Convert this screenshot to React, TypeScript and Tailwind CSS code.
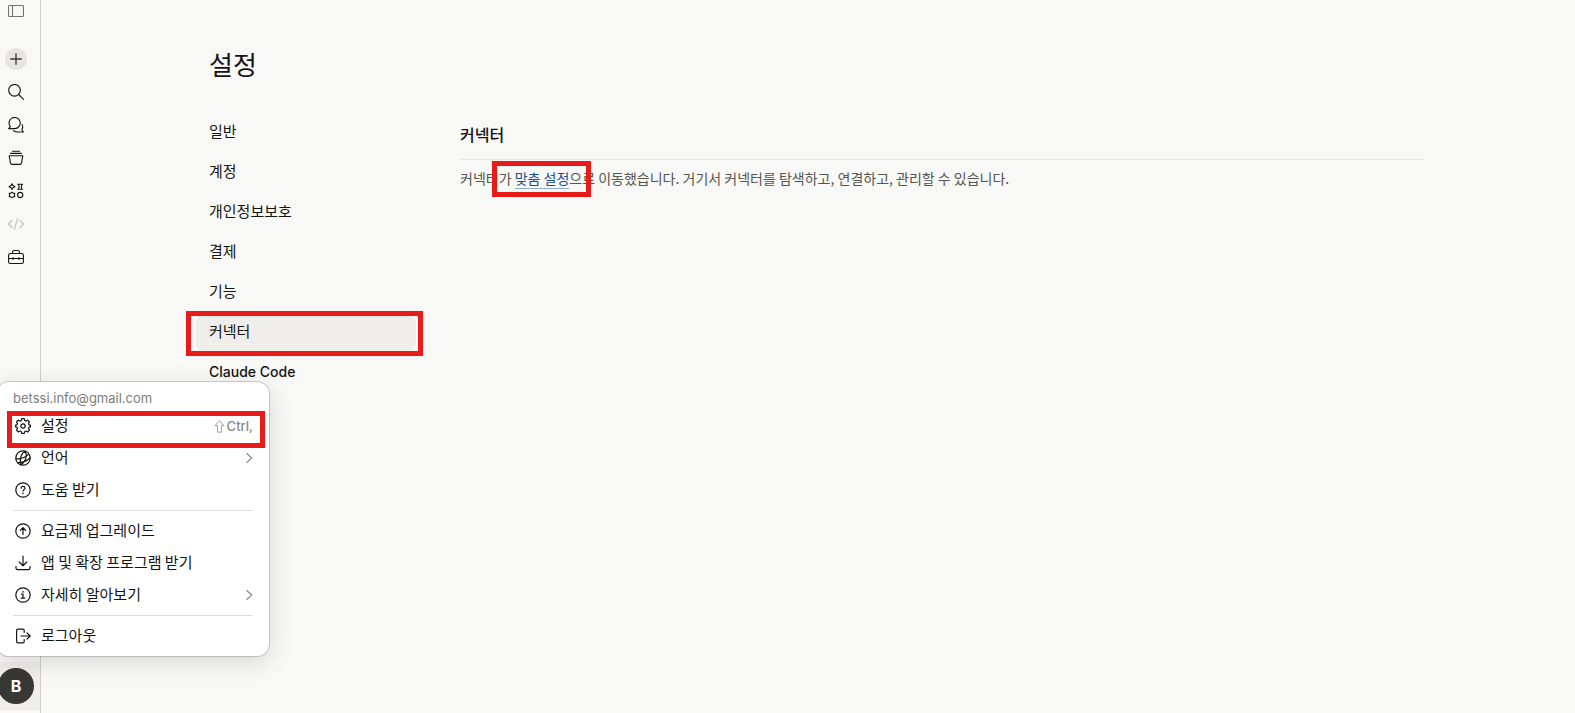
import type { ReactNode } from "react";

const Icon = ({ children, size = 16, width = 1.1 }: { children: ReactNode; size?: number; width?: number }) => (
  <svg
    width={size}
    height={size}
    viewBox="0 0 16 16"
    fill="none"
    stroke="currentColor"
    strokeWidth={width}
    strokeLinecap="round"
    strokeLinejoin="round"
    aria-hidden="true"
    className="shrink-0"
  >
    {children}
  </svg>
);

const sidebarItems = [
  {
    label: "검색",
    icon: (
      <>
        <circle cx="6.5" cy="6.3" r="5.8" />
        <path d="M10.7 10.5l4.8 4.8" />
      </>
    ),
  },
  {
    label: "채팅",
    icon: (
      <>
        <path d="M.6 11.600l1.800-1.900A5.600 5.600 0 1 1 7.200 11.600z" />
        <path d="M14.200 7.600c.8 1.900.6 3.700-.4 5.200l1.600 2.200H10.200c-2.100 0-3.600-.5-4.600-1.300" />
      </>
    ),
  },
  {
    label: "프로젝트",
    icon: (
      <>
        <path d="M4.500 1.200h7M2.600 3.400h10.800" />
        <path d="M1.200 5.700h13.600l-1.200 7.100a1.900 1.900 0 0 1-1.900 1.600H4.300a1.900 1.900 0 0 1-1.900-1.600z" />
      </>
    ),
  },
  {
    label: "아티팩트",
    icon: (
      <>
        <path d="M4 .9l1 1.700 1.900 1.100L5 4.800 4 6.500 3 4.800 1.100 3.700 3 2.600z" />
        <path d="M9.700 1.200h5M9.700 6.200h5M10.500 1.200c.8 1.700.8 3.300 0 5M13.900 1.200c-.8 1.700-.8 3.300 0 5" />
        <path d="M4 9.200l1.200 1 1.600.2-.5 1.600.5 1.600-1.600.2-1.200 1-1.200-1-1.600-.2.500-1.600-.5-1.600 1.600-.2z" />
        <circle cx="12.200" cy="12" r="2.600" />
      </>
    ),
  },
  {
    label: "코드",
    muted: true,
    icon: <path d="M4.200 4.300L.6 8l3.600 3.700M11.800 4.300L15.400 8l-3.600 3.700M9.300 2.800l-2.600 10.400" />,
  },
  {
    label: "도구",
    icon: (
      <>
        <rect x=".6" y="4.500" width="14.800" height="10" rx="1.800" />
        <path d="M4.500 4.500V3.200c0-1 .7-1.700 1.700-1.700h3.600c1 0 1.700.7 1.700 1.700v1.300M.6 9.500h14.800M5 8.500v2M11 8.500v2" />
      </>
    ),
  },
];

const settingsNav = ["일반", "계정", "개인정보보호", "결제", "기능", "커넥터", "Claude Code"];

const icons = {
  gear: (
    <>
      <circle cx="8" cy="8" r="2.200" />
      <path d="M6.700 .7h2.600l.5 1.900 1.200.5 1.700-1 1.800 1.900-1 1.600.5 1.200 1.400.4v1.700l-1.400.4-.5 1.200 1 1.600-1.800 1.900-1.700-1-1.200.5-.5 1.800H6.700l-.5-1.800-1.200-.5-1.700 1-1.800-1.900 1-1.600-.5-1.200-1.400-.4V7.200l1.400-.4.5-1.200-1-1.600 1.800-1.900 1.700 1 1.200-.5z" />
    </>
  ),
  globe: (
    <>
      <circle cx="8" cy="8" r="7.200" />
      <path d="M10.200 1.200C6.400 2.800 4.300 8.600 5.800 14.800M10.200 1.200c2.400 4.300.6 11-4.400 13.600M.9 8.800c4.300.4 8.900-1.200 12.300-4.200M2.600 12.600c4.600.2 9-1.400 12.500-4.600" />
    </>
  ),
  help: (
    <>
      <circle cx="8" cy="8" r="7.200" />
      <path d="M6.100 6.300c0-1.100.8-1.900 1.900-1.900s1.900.8 1.900 1.800c0 1.500-1.900 1.500-1.900 2.900" />
      <path d="M8 11.300v.2" strokeWidth="1.500" />
    </>
  ),
  upgrade: (
    <>
      <circle cx="8" cy="8" r="7.200" />
      <path d="M8 11.400V4.800M5.300 7.400L8 4.700l2.700 2.700" />
    </>
  ),
  download: <path d="M8 1.200v9.400M4.200 7L8 10.700 11.800 7M1 11.500v1.600c0 .9.700 1.600 1.600 1.600h10.800c.9 0 1.600-.7 1.600-1.600v-1.600" />,
  info: (
    <>
      <circle cx="8" cy="8" r="7.200" />
      <path d="M6.500 7.200H8v3.900M6.200 11.200h3.600" />
      <path d="M8 4.700v.2" strokeWidth="1.500" />
    </>
  ),
  logout: (
    <path d="M9.200 4.400V2.500c0-.8-.6-1.400-1.400-1.400H3c-.8 0-1.400.6-1.400 1.400v11c0 .8.6 1.400 1.400 1.400h4.800c.8 0 1.400-.6 1.400-1.400v-1.900M5.800 8h9.400M12 4.800L15.200 8 12 11.200" />
  ),
};

const MenuItem = ({ icon, label, trailing }: { icon: ReactNode; label: string; trailing?: ReactNode }) => (
  <button type="button" className="flex h-8 w-full items-center gap-[10px] pr-4 pl-[18px] text-left">
    <Icon width={1.2}>{icon}</Icon>
    <span className="flex-1 pb-[2px]">{label}</span>
    {trailing}
  </button>
);

const Chevron = () => (
  <span className="text-[#8a8a85]">
    <svg width="8" height="12" viewBox="0 0 8 12" fill="none" stroke="currentColor" strokeWidth="1.200" aria-hidden="true">
      <path d="M1.500 1.200L6.800 6l-5.300 4.800" />
    </svg>
  </span>
);

const Divider = () => <hr className="mx-4 my-1 border-[#dededb]" />;

const AccountMenu = () => (
  <div className="absolute bottom-full -left-[3px] z-10 mb-[6px] w-[272px] rounded-xl bg-white py-1 text-[15px] leading-5 shadow-[0_0_0_1px_rgba(0,0,0,0.16),0_6px_24px_rgba(0,0,0,0.14)]">
    <p className="h-6 px-4 font-['Inter',sans-serif] text-[13px] leading-6 text-[#7d7d78]">betssi.info@gmail.com</p>
    <div className="relative">
      <MenuItem
        icon={icons.gear}
        label="설정"
        trailing={
          <span className="flex items-center gap-[2px] font-['Inter',sans-serif] text-[13px] font-medium text-[#8a8a85]">
            <svg width="11" height="13" viewBox="0 0 11 13" fill="none" stroke="currentColor" strokeWidth=".8" aria-hidden="true">
              <path d="M5.500 .8L10 5.600H7.500v6.600h-4V5.600H1z" />
            </svg>
            Ctrl,
          </span>
        }
      />
      <div className="pointer-events-none absolute top-px right-1 -bottom-[6px] left-[10px] border-[5px] border-[#e81b1b]" />
    </div>
    <MenuItem icon={icons.globe} label="언어" trailing={<Chevron />} />
    <MenuItem icon={icons.help} label="도움 받기" />
    <Divider />
    <MenuItem icon={icons.upgrade} label="요금제 업그레이드" />
    <MenuItem icon={icons.download} label="앱 및 확장 프로그램 받기" />
    <MenuItem icon={icons.info} label="자세히 알아보기" trailing={<Chevron />} />
    <Divider />
    <MenuItem icon={icons.logout} label="로그아웃" />
  </div>
);

const Sidebar = () => (
  <aside className="flex w-[41px] shrink-0 flex-col border-r border-[#cfcfcc]">
    <button type="button" aria-label="사이드바" className="ml-[5px] flex size-[22px] items-center justify-center text-[#73726c]">
      <Icon>
        <rect x=".5" y="2.500" width="15" height="11" rx="1.200" />
        <path d="M4.500 2.500v11" />
      </Icon>
    </button>
    <nav className="mt-[26px] ml-[5px] flex flex-col gap-[11px]">
      <button type="button" aria-label="새 채팅" className="flex size-[22px] items-center justify-center rounded-full bg-[#e5e4e0] text-[#3d3d3a]">
        <Icon size={12} width={1.8}>
          <path d="M8 1v14M1 8h14" />
        </Icon>
      </button>
      {sidebarItems.map((item) => (
        <button
          key={item.label}
          type="button"
          aria-label={item.label}
          className={`flex size-[22px] items-center justify-center ${item.muted ? "text-[#bdbdb9]" : ""}`}
        >
          <Icon>{item.icon}</Icon>
        </button>
      ))}
    </nav>
    <div className="relative mt-auto mb-[3px] h-12 bg-[#efeeea]">
      <AccountMenu />
      <button
        type="button"
        className="mt-[6px] -ml-[2px] flex size-9 items-center justify-center rounded-full bg-[#373734] font-['Inter',sans-serif] text-base font-bold text-white"
      >
        B
      </button>
    </div>
  </aside>
);

const App = () => {
  return (
    <div className="flex min-h-screen bg-[#f8f8f6] font-['Noto_Sans_CJK_KR','Inter',sans-serif] text-[#141413]">
      <Sidebar />
      <main className="min-w-0 flex-1">
        <div className="mx-auto max-w-[1280px] pt-[46px] pr-6 pl-7">
          <h1 className="pl-[13px] text-[26px] leading-9">설정</h1>
          <div className="mt-8 grid grid-cols-[220px_1fr] gap-11">
            <nav className="flex flex-col gap-1 pt-px text-[15px] leading-5">
              {settingsNav.map((label) => {
                const active = label === "커넥터";
                const latin = label === "Claude Code";
                return (
                  <a
                    key={label}
                    href="#"
                    className={`relative flex h-9 items-center rounded-lg px-[13px] ${active ? "bg-[#efeeea]" : ""} ${
                      latin ? "pb-[2px] font-['Inter',sans-serif] text-sm font-medium" : "pb-1"
                    }`}
                  >
                    {label}
                    {active && (
                      <span className="pointer-events-none absolute -top-1 -right-[7px] -bottom-[5px] -left-[10px] border-[5px] border-[#e81b1b]" />
                    )}
                  </a>
                );
              })}
            </nav>
            <section>
              <h2 className="border-b border-[#e8e8e5] pt-2 pb-[13px] text-base font-medium">커넥터</h2>
              <p className="pt-2 text-sm leading-5 text-[#55544f]">
                커넥터가{" "}
                <span className="relative">
                  <a href="#" className="border-b border-[#8fabd4] text-[#1b4f96]">
                    맞춤 설정
                  </a>
                  <span className="pointer-events-none absolute -top-[7px] -right-[22px] -bottom-[9px] -left-[23px] border-[5px] border-[#e81b1b]" />
                </span>
                으로 이동했습니다. 거기서 커넥터를 탐색하고, 연결하고, 관리할 수 있습니다.
              </p>
            </section>
          </div>
        </div>
      </main>
    </div>
  );
};

export default App;
